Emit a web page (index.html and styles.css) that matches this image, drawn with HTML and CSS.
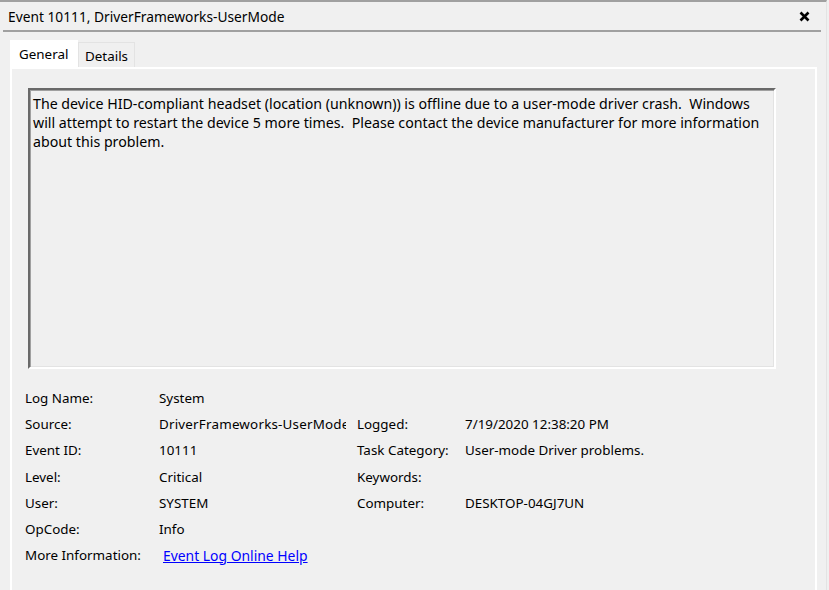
FILE: index.html
```html
<!DOCTYPE html>
<html lang="en">

<head>
    <meta charset="utf-8">
    <title>Event 10111, DriverFrameworks-UserMode</title>
    <link rel="stylesheet" href="styles.css">
</head>

<body>
    <div class="window">
        <div class="titlebar">
            <span class="title">Event 10111, DriverFrameworks-UserMode</span>
            <svg class="close" width="11" height="11" viewBox="0 0 11 11">
                <path d="M1.5 1.5 L9.5 9.5 M9.5 1.5 L1.5 9.5" stroke="#000" stroke-width="2.6" />
            </svg>
        </div>
        <div class="separator"></div>

        <div class="tabs">
            <div class="tab active">General</div>
            <div class="tab">Details</div>
        </div>

        <div class="panel">
            <div class="message">
                The device HID-compliant headset (location (unknown)) is offline due to a user-mode driver crash.&nbsp; Windows<br>
                will attempt to restart the device 5 more times.&nbsp; Please contact the device manufacturer for more information<br>
                about this problem.
            </div>

            <div class="fields">
                <div class="label">Log Name:</div>
                <div class="value">System</div>
                <div></div>
                <div></div>

                <div class="label">Source:</div>
                <div class="value clip">DriverFrameworks-UserMode</div>
                <div class="label">Logged:</div>
                <div class="value">7/19/2020 12:38:20 PM</div>

                <div class="label">Event ID:</div>
                <div class="value">10111</div>
                <div class="label">Task Category:</div>
                <div class="value">User-mode Driver problems.</div>

                <div class="label">Level:</div>
                <div class="value">Critical</div>
                <div class="label">Keywords:</div>
                <div class="value"></div>

                <div class="label">User:</div>
                <div class="value">SYSTEM</div>
                <div class="label">Computer:</div>
                <div class="value">DESKTOP-04GJ7UN</div>

                <div class="label">OpCode:</div>
                <div class="value">Info</div>
                <div></div>
                <div></div>

                <div class="label">More Information:</div>
                <div class="value"><a class="link" href="#">Event Log Online Help</a></div>
                <div></div>
                <div></div>
            </div>
        </div>
    </div>
</body>

</html>
```

FILE: styles.css
```css
:root {
    --face: #f0f0f0;
    --shadow: #a0a0a0;
    --light: #ffffff;
    --edge: #e3e3e3;
}

html,
body {
    margin: 0;
    height: 100%;
    background: var(--face);
    overflow: hidden;
}

body {
    font-family: "Noto Sans", "Open Sans", sans-serif;
    font-size: 13.4px;
    color: #000;
}

.window {
    height: 100%;
    box-sizing: border-box;
    border-top: 2px solid var(--shadow);
    border-right: 1px solid var(--edge);
    width: 827px;
}

.titlebar {
    height: 28px;
    display: flex;
    align-items: center;
    justify-content: space-between;
    padding: 0 16px 0 8px;
}

.title {
    font-size: 13.75px;
}

.close {
    display: block;
    margin-top: 1px;
}

.separator {
    height: 2px;
    margin: 0 5px 0 3px;
    background: var(--shadow);
}

.tabs {
    display: flex;
    align-items: flex-end;
    margin: 8px 0 0 10px;
    height: 27px;
}

.tab {
    box-sizing: border-box;
    padding: 0 8px;
    line-height: 25px;
    border: 1px solid var(--edge);
    border-bottom: none;
    height: 25px;
}

.tab.active {
    background: var(--light);
    border-color: var(--light);
    height: 28px;
    line-height: 27px;
    padding: 0 8px 0 8px;
    margin-bottom: -1px;
    width: 68px;
}

.tab:not(.active) {
    width: 57px;
    padding: 0 6px;
    line-height: 27px;
}

.panel {
    margin-left: 10px;
    width: 807px;
    height: 540px;
    box-sizing: border-box;
    border-top: 2px solid var(--light);
    border-left: 2px solid var(--light);
    border-right: 2px solid var(--light);
    padding: 19px 0 0 16px;
}

.message {
    box-sizing: border-box;
    width: 748px;
    height: 281px;
    border-top: 2px solid #696969;
    border-left: 2px solid #696969;
    border-right: 2px solid var(--light);
    border-bottom: 2px solid var(--light);
    box-shadow: inset 1px 1px 0 var(--shadow), inset -1px -1px 0 var(--edge);
    padding: 4px 0 0 3px;
    font-size: 14.2px;
    line-height: 19px;
    white-space: nowrap;
}

.fields {
    display: grid;
    grid-template-columns: 134px 198px 108px auto;
    grid-auto-rows: 26.2px;
    margin: 16px 0 0 -3px;
    align-items: center;
}

.value {
    white-space: nowrap;
}

.clip {
    overflow: hidden;
    width: 187px;
    letter-spacing: 0.2px;
}

.link {
    color: #0000ff;
    font-size: 13.9px;
    text-decoration: underline;
    margin-left: 4px;
}
```
